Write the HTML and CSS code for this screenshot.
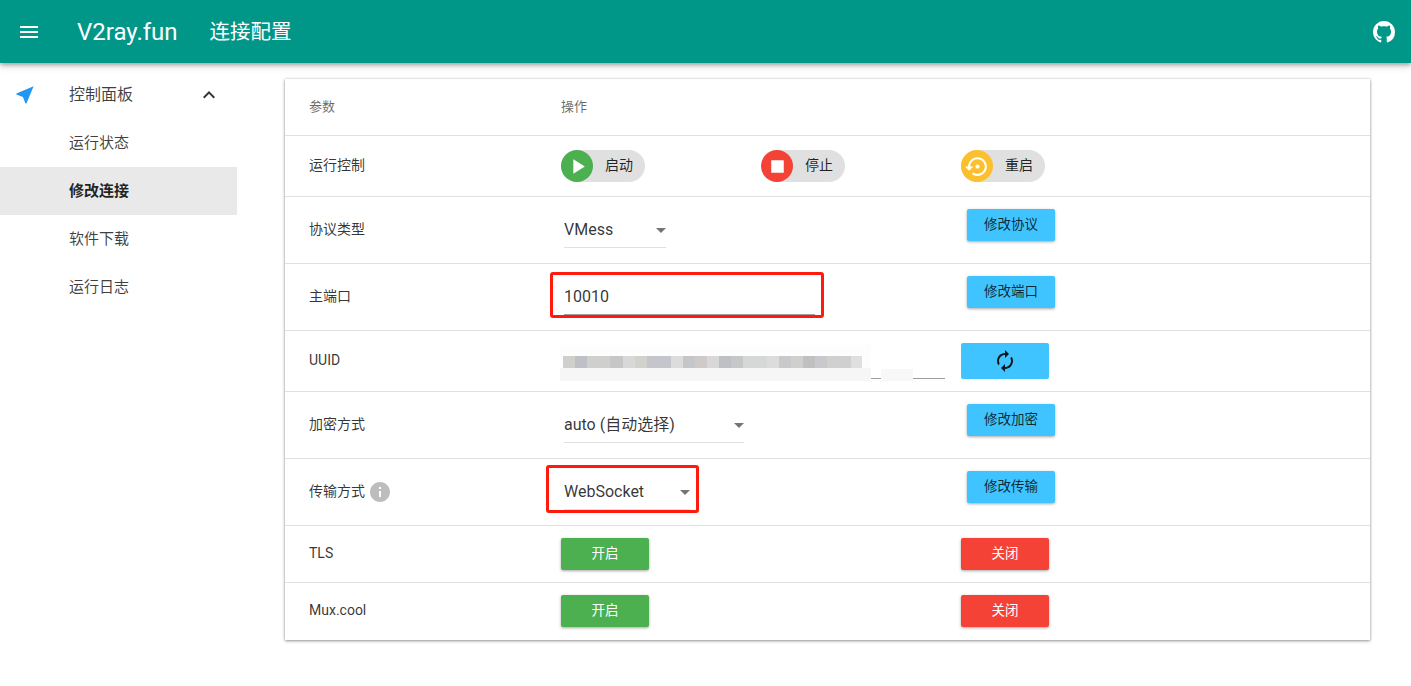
FILE: index.html
```html
<!DOCTYPE html>
<html lang="zh-CN">
<head>
  <meta charset="UTF-8" />
  <title>V2ray.fun</title>
  <link rel="stylesheet" href="styles.css">
</head>
<body>
  <header class="toolbar">
    <svg class="menu-icon" viewBox="0 0 24 24"><path d="M3 18h18v-2H3v2zm0-5h18v-2H3v2zm0-7v2h18V6H3z"/></svg>
    <span class="brand">V2ray.fun</span>
    <span class="page-title">连接配置</span>
    <svg class="github-icon" viewBox="0 0 16 16"><path d="M8 0C3.58 0 0 3.58 0 8c0 3.54 2.29 6.53 5.47 7.59.4.07.55-.17.55-.38 0-.19-.01-.82-.01-1.49-2.01.37-2.53-.49-2.69-.94-.09-.23-.48-.94-.82-1.13-.28-.15-.68-.52-.01-.53.63-.01 1.08.58 1.23.82.72 1.21 1.87.87 2.33.66.07-.52.28-.87.51-1.07-1.78-.2-3.64-.89-3.64-3.95 0-.87.31-1.59.82-2.15-.08-.2-.36-1.02.08-2.12 0 0 .67-.21 2.2.82.64-.18 1.32-.27 2-.27.68 0 1.36.09 2 .27 1.53-1.04 2.2-.82 2.2-.82.44 1.1.16 1.92.08 2.12.51.56.82 1.27.82 2.15 0 3.07-1.87 3.75-3.65 3.95.29.25.54.73.54 1.48 0 1.07-.01 1.93-.01 2.2 0 .21.15.46.55.38A8.013 8.013 0 0016 8c0-4.42-3.58-8-8-8z"/></svg>
  </header>

  <div class="layout">
    <nav class="sidebar">
      <div class="nav-item nav-parent">
        <svg class="nav-icon" viewBox="0 0 24 24"><path d="M21 3L3 10.53v.98l6.84 2.65L12.48 21h.98L21 3z"/></svg>
        <span class="nav-text">控制面板</span>
        <svg class="nav-caret" viewBox="0 0 24 24"><path d="M12 8l-6 6 1.41 1.41L12 10.83l4.59 4.58L18 14z"/></svg>
      </div>
      <div class="nav-item">运行状态</div>
      <div class="nav-item selected">修改连接</div>
      <div class="nav-item">软件下载</div>
      <div class="nav-item">运行日志</div>
    </nav>

    <main class="card">
      <div class="row row-head">
        <div class="label">参数</div>
        <div class="wide head-text">操作</div>
      </div>

      <div class="row row-chips">
        <div class="label">运行控制</div>
        <div class="chip">
          <span class="chip-avatar green"><svg viewBox="0 0 24 24"><path d="M8 5v14l11-7z"/></svg></span>
          <span class="chip-text">启动</span>
        </div>
        <div class="chip">
          <span class="chip-avatar red"><svg viewBox="0 0 24 24"><path d="M6 6h12v12H6z"/></svg></span>
          <span class="chip-text">停止</span>
        </div>
        <div class="chip">
          <span class="chip-avatar amber"><svg viewBox="0 0 24 24"><path d="M14 12c0-1.1-.9-2-2-2s-2 .9-2 2 .9 2 2 2 2-.9 2-2zm-2-9c-4.97 0-9 4.03-9 9H0l4 4 4-4H5c0-3.87 3.13-7 7-7s7 3.13 7 7-3.13 7-7 7c-1.51 0-2.91-.49-4.06-1.3l-1.42 1.44C8.04 20.3 9.94 21 12 21c4.97 0 9-4.03 9-9s-4.03-9-9-9z"/></svg></span>
          <span class="chip-text">重启</span>
        </div>
      </div>

      <div class="row row-field">
        <div class="label">协议类型</div>
        <div class="wide"><div class="field select w-vmess">VMess</div></div>
        <button class="btn blue raised">修改协议</button>
      </div>

      <div class="row row-field">
        <div class="label">主端口</div>
        <div class="wide"><div class="field w-port dark-line">10010<span class="highlight"></span></div></div>
        <button class="btn blue raised">修改端口</button>
      </div>

      <div class="row row-uuid">
        <div class="label">UUID</div>
        <div class="wide"><div class="field w-uuid dark-line"><span class="blur"><span class="blur-bar"></span></span></div></div>
        <button class="btn blue tall">
          <svg viewBox="0 0 24 24"><path d="M12 6v3l4-4-4-4v3c-4.42 0-8 3.58-8 8 0 1.57.46 3.03 1.24 4.26L6.7 14.8c-.45-.83-.7-1.79-.7-2.8 0-3.31 2.69-6 6-6zm6.76 1.74L17.3 9.2c.44.84.7 1.79.7 2.8 0 3.31-2.69 6-6 6v-3l-4 4 4 4v-3c4.42 0 8-3.58 8-8 0-1.57-.46-3.03-1.24-4.26z"/></svg>
        </button>
      </div>

      <div class="row row-field">
        <div class="label">加密方式</div>
        <div class="wide"><div class="field select w-auto">auto (自动选择)</div></div>
        <button class="btn blue raised">修改加密</button>
      </div>

      <div class="row row-field">
        <div class="label label-info">传输方式
          <svg class="info-icon" viewBox="0 0 24 24"><path d="M12 2C6.48 2 2 6.48 2 12s4.48 10 10 10 10-4.48 10-10S17.52 2 12 2zm1 15h-2v-6h2v6zm0-8h-2V7h2v2z"/></svg>
        </div>
        <div class="wide"><div class="field select w-ws">WebSocket<span class="highlight highlight-ws"></span></div></div>
        <button class="btn blue raised">修改传输</button>
      </div>

      <div class="row row-switch">
        <div class="label">TLS</div>
        <div class="wide"><button class="btn green">开启</button></div>
        <button class="btn red">关闭</button>
      </div>

      <div class="row row-switch last">
        <div class="label">Mux.cool</div>
        <div class="wide"><button class="btn green">开启</button></div>
        <button class="btn red">关闭</button>
      </div>
    </main>
  </div>
</body>
</html>
```

FILE: styles.css
```css
* {
  box-sizing: border-box;
}
html, body {
  height: 100%;
}
body {
  margin: 0;
  overflow: hidden;
  background-color: #fff;
  color: rgba(0, 0, 0, 0.87);
  font-family: Roboto, "Noto Sans CJK SC", sans-serif;
  font-size: 14px;
}
.toolbar {
  position: relative;
  display: flex;
  align-items: center;
  height: 63px;
  padding-left: 17px;
  background-color: #009688;
  color: #fff;
  box-shadow: 0 2px 4px rgba(0, 0, 0, 0.3), 0 4px 8px rgba(0, 0, 0, 0.1);
}
.menu-icon {
  width: 24px;
  height: 24px;
  fill: #fff;
}
.brand {
  margin-left: 36px;
  font-size: 24px;
}
.page-title {
  margin-left: 32px;
  padding-bottom: 4px;
  font-size: 20.5px;
}
.github-icon {
  width: 22px;
  height: 22px;
  margin-left: auto;
  margin-right: 16px;
  fill: #fff;
}
.layout {
  display: flex;
  align-items: flex-start;
}
.sidebar {
  flex: none;
  width: 237px;
  padding-top: 8px;
}
.nav-item {
  display: flex;
  align-items: center;
  height: 48px;
  padding-left: 69px;
  padding-bottom: 4px;
  font-size: 15px;
  color: rgba(0, 0, 0, 0.75);
}
.nav-parent {
  padding-left: 15px;
  padding-bottom: 0;
  font-size: 16px;
}
.nav-text {
  padding-bottom: 4px;
}
.nav-icon {
  width: 20px;
  height: 20px;
  margin-right: 34px;
  fill: #2196f3;
  transform: scale(1.15);
}
.nav-caret {
  width: 24px;
  height: 24px;
  margin-left: 64px;
  fill: rgba(0, 0, 0, 0.8);
}
.selected {
  background-color: #e9e9e9;
  color: rgba(0, 0, 0, 0.87);
  font-weight: 700;
}
.card {
  flex: none;
  width: 1085px;
  margin: 16px 0 0 48px;
  background-color: #fff;
  box-shadow: 0 1px 3px rgba(0, 0, 0, 0.4), 0 0 2px rgba(0, 0, 0, 0.15);
}
.row {
  display: grid;
  grid-template-columns: 276px 200px 200px 1fr;
  align-items: center;
  border-bottom: 1px solid #e0e0e0;
}
.row.last {
  border-bottom-color: transparent;
}
.row-head {
  height: 57px;
}
.row-head .label, .head-text {
  padding-bottom: 4px;
  font-size: 13px;
  color: rgba(0, 0, 0, 0.6);
}
.row-chips {
  height: 61px;
}
.row-field {
  height: 67px;
}
.row-uuid {
  height: 61px;
}
.row-switch {
  height: 57px;
}
.label {
  padding-left: 24px;
  padding-bottom: 4px;
  font-size: 14px;
  color: rgba(0, 0, 0, 0.8);
}
.row-switch .label, .row-uuid .label {
  padding-bottom: 2px;
}
.label-info {
  display: flex;
  align-items: center;
}
.info-icon {
  width: 24px;
  height: 24px;
  margin: 4px 0 0 3px;
  fill: #bdbdbd;
}
.wide {
  grid-column: span 2;
}
.chip {
  display: flex;
  align-items: center;
  width: 84px;
  height: 32px;
  border-radius: 16px;
  background-color: #e0e0e0;
}
.chip-avatar {
  display: flex;
  align-items: center;
  justify-content: center;
  width: 32px;
  height: 32px;
  border-radius: 50%;
}
.chip-avatar svg {
  width: 25px;
  height: 25px;
  fill: #fff;
}
.chip-text {
  margin-left: 12px;
  padding-bottom: 4px;
  font-size: 14px;
}
.green {
  background-color: #4caf50;
}
.red {
  background-color: #f44336;
}
.amber {
  background-color: #fbc02d;
}
.blue {
  background-color: #40c4ff;
}
.field {
  position: relative;
  height: 36px;
  margin-left: 3px;
  border-bottom: 1px solid #e0e0e0;
  font-size: 16px;
  line-height: 35px;
  color: rgba(0, 0, 0, 0.8);
}
.dark-line {
  border-bottom: 1px solid #9e9e9e;
}
.select::after {
  content: "";
  position: absolute;
  right: 0;
  top: 16px;
  border-top: 5px solid #757575;
  border-left: 5px solid transparent;
  border-right: 5px solid transparent;
}
.w-vmess {
  width: 102px;
}
.w-port {
  width: 251px;
}
.w-uuid {
  width: 381px;
}
.w-auto {
  width: 180px;
}
.w-ws {
  width: 126px;
}
.highlight {
  position: absolute;
  left: -14px;
  right: -9px;
  top: -7px;
  bottom: -4px;
  border: 3px solid #ff1a0d;
  border-radius: 3px;
}
.highlight-ws {
  left: -18px;
  right: -9px;
  top: -9px;
  bottom: -4px;
}
/* smeared uuid value: the underline only shows through where the smear stops */
.blur {
  position: absolute;
  left: -4px;
  top: 2px;
  width: 311px;
  height: 36px;
  background: linear-gradient(#fdfdfd 0 23px, #f6f6f6 23px);
}
.blur::after {
  content: "";
  position: absolute;
  left: 321px;
  top: 24px;
  width: 32px;
  height: 12px;
  background-color: #f8f8f8;
}
.blur-bar {
  position: absolute;
  left: 3px;
  top: 11px;
  width: 299px;
  height: 12px;
  background: linear-gradient(90deg,
    #cfcfcb 0 12px, #bfc0c5 12px 24px, #cfcfcd 24px 47px, #c6c6c7 47px 60px,
    #d8d8d8 60px 72px, #d2d2cd 72px 84px, #c5c6cc 84px 108px, #dcdcdc 108px 120px,
    #c5c6ca 120px 132px, #cfc9c8 132px 144px, #d8d8d8 144px 156px, #bfc0c3 156px 168px,
    #c6c7c9 168px 180px, #d6d8d8 180px 204px, #dcdcdc 204px 216px, #c9c9cd 216px 228px,
    #d0cfcd 228px 240px, #c0c0c3 240px 252px, #c8c8cd 252px 264px, #d2d0ce 264px 276px,
    #cfcfcf 276px 288px, #dfdfdf 288px 299px);
}
.btn {
  width: 88px;
  height: 32px;
  padding: 0 0 4px;
  border: none;
  border-radius: 2px;
  font-family: inherit;
  font-size: 13.5px;
  color: #fff;
  box-shadow: 0 1px 3px rgba(0, 0, 0, 0.35);
}
.btn.blue {
  color: rgba(0, 0, 0, 0.8);
}
.raised {
  margin: 0 0 11px 6px;
}
.tall {
  display: flex;
  align-items: center;
  justify-content: center;
  height: 36px;
  padding: 0;
  box-shadow: none;
}
.tall svg {
  width: 24px;
  height: 24px;
  fill: rgba(0, 0, 0, 0.87);
}
```
